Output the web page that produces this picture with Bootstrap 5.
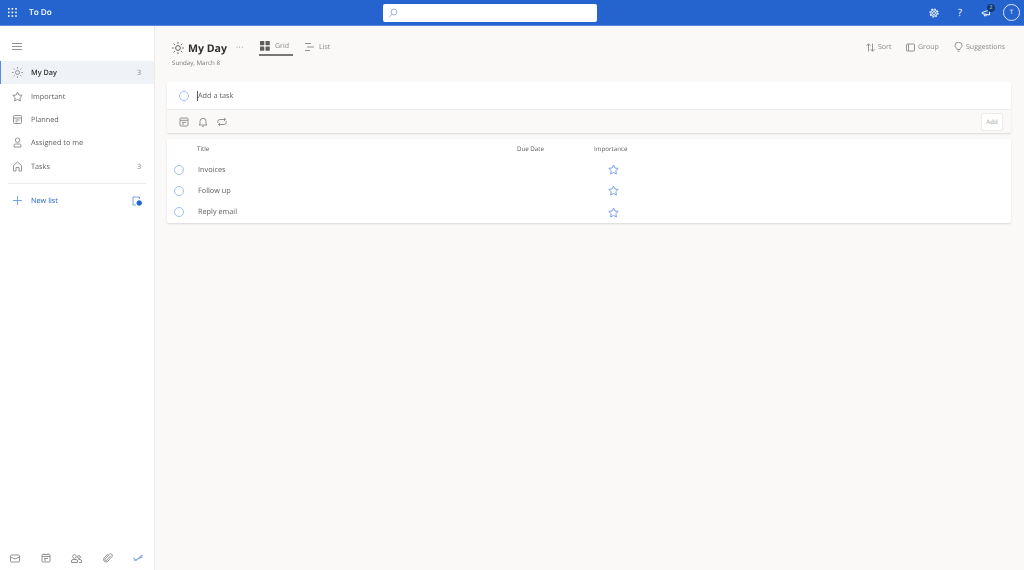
<!DOCTYPE html>
<html lang="en">
<head>
<meta charset="utf-8">
<title>To Do</title>
<link href="https://cdn.jsdelivr.net/npm/bootstrap@5.3.0/dist/css/bootstrap.min.css" rel="stylesheet">
<style>
html,body{height:570px;overflow:hidden}
body{font-family:"Open Sans","Noto Sans",sans-serif;font-size:7.3px;color:#323130;background:#faf9f8;text-rendering:geometricPrecision}
svg{display:block;fill:none;stroke:currentColor;stroke-width:.9;flex:none}
.app-top{height:26px;background:#2564cf;color:#fff;padding:0 4px 0 8px;border-bottom:1px solid #5a8ae0}
.app-name{font-size:8.2px;font-weight:600;margin-left:12px;padding-top:2px}
.search-slot{position:absolute;left:383px;top:4px;width:214px;height:18px;background:#fff;border-radius:2px;color:#8fabe3;padding-left:5px}
.top-tools{gap:16px}
.avatar-ring{width:17px;height:17px;border:1px solid #dfe8f8;border-radius:50%;font-size:6px}
.note-wrap{position:relative;margin-right:-5px}
.note-count{position:absolute;right:-3px;top:-4px;width:8px;height:8px;border-radius:50%;background:#0f3a75;font-size:5px;line-height:8px;text-align:center}
.app-body{height:544px}
.side-pane{width:155px;background:#fff;border-right:1px solid #edebe9}
.menu-btn{height:35px;padding:17px 0 0 12px;color:#8a8886}
.side-row{height:23.4px;padding:0 13px 0 12px;color:#8a8886;font-size:7.3px}
.side-row svg{margin-right:8px}
.side-row.is-on{background:#eff3f8;box-shadow:inset 1px 0 0 #5a8ae0}
.side-row .side-label{flex:1;color:#605e5c}
.side-row.is-on .side-label{color:#323130;font-weight:600}
.side-rule{margin:5px 8px 5px 8px;height:1px;background:#edebe9}
.side-new{color:#6f9ae0}
.side-new .side-label{color:#2564cf}
.side-row svg.side-tail{margin:0 -1px 0 0}
.side-foot{height:24px;padding:0 11px 0 10px;color:#8a8886}
.main-pane{padding:0 13px 0 12px}
.title-band{height:56px;padding:12px 0 0 5px}
.title-stack{width:87px}
.page-title{font-size:10.6px;font-weight:700;line-height:18px;margin:0 0 0 4px;white-space:nowrap;color:#323130;padding-top:2px}
.page-more{margin-left:9px;color:#8a8886;font-size:8px;letter-spacing:.5px}
.page-date{font-size:6.2px;color:#797775;line-height:9px}
.view-tab{height:18px;color:#8a8886;gap:5px;font-size:7px;padding:0 1px}
.view-tab.is-on{border-bottom:2px solid #797775;width:34px}
.view-list{margin-left:11px}
.act-btn{gap:3px;font-size:7px;color:#8a8886}
.act-group{height:18px;gap:15px;margin-right:6px}
.task-box{background:#fff;box-shadow:0 1px 2px rgba(0,0,0,.13);border-radius:2px}
.task-add{height:28px;padding-left:12px;border-bottom:1px solid #edebe9}
.ring-mark{width:10px;height:10px;border:1px solid #a4bfec;border-radius:50%;flex:none}
.add-hint{margin-left:8px;border-left:1px solid #605e5c;line-height:10px;color:#605e5c;font-size:7.3px}
.task-bar{height:23px;background:#faf9f8;padding:0 8px 0 12px;color:#8a8886;gap:9px;border-radius:0 0 2px 2px}
.add-btn{width:22px;height:18px;background:#fff;border:1px solid #edebe9;font-size:6.2px;color:#a19f9d;line-height:16px;text-align:center;border-radius:2px}
.grid-box{margin-top:6px;height:84px}
.grid-head{height:20px;font-size:6.2px;color:#605e5c}
.grid-row{height:21.3px;font-size:7.3px;color:#605e5c}
.cell-check{width:31px;padding-left:7px}
.cell-title{width:319px}
.cell-due{width:77px}
.star-cell{padding-left:14px;color:#6f9ae0}
.head-title{padding-left:30px;width:350px}
.app-name,.side-label,.side-count,.page-title,.page-date,.page-more,.tab-text,.act-text,.add-hint,.head-text,.row-text,.add-text{will-change:transform}
.side-label,.side-count,.tab-text,.act-text{padding-top:2px}
.row-text{padding-top:1px}
</style>
</head>
<body>
<header class="app-top d-flex align-items-center position-relative">
  <svg width="9" height="9" viewBox="0 0 9 9" style="stroke:none;fill:#fff"><rect width="1.600" height="1.600" x="0" y="0"/><rect width="1.600" height="1.600" x="3.600" y="0"/><rect width="1.600" height="1.600" x="7.200" y="0"/><rect width="1.600" height="1.600" x="0" y="3.600"/><rect width="1.600" height="1.600" x="3.600" y="3.600"/><rect width="1.600" height="1.600" x="7.200" y="3.600"/><rect width="1.600" height="1.600" x="0" y="7.200"/><rect width="1.600" height="1.600" x="3.600" y="7.200"/><rect width="1.600" height="1.600" x="7.200" y="7.200"/></svg>
  <span class="app-name">To Do</span>
  <div class="search-slot d-flex align-items-center">
    <svg width="10" height="10" viewBox="0 0 10 10"><circle cx="6" cy="4" r="2.900"/><path d="M4 6.200 1 9.200"/></svg>
  </div>
  <div class="ms-auto d-flex align-items-center top-tools">
    <svg width="10" height="10" viewBox="0 0 10 10"><circle cx="5" cy="5" r="1.500"/><circle cx="5" cy="5" r="3.200"/><circle cx="5" cy="5" r="4" stroke-width="1.200" stroke-dasharray="1.500 1.640"/></svg>
    <span style="font-size:10px;line-height:11px;width:10px;text-align:center">?</span>
    <span class="note-wrap"><svg width="11" height="10" viewBox="0 0 11 10"><path d="M1 4.500 8.500 2v5L1 5.500zM3 6l.6 2 2-.4-.4-1.200"/></svg><span class="note-count">2</span></span>
    <span class="avatar-ring d-flex align-items-center justify-content-center">T</span>
  </div>
</header>
<div class="app-body d-flex">
  <nav class="side-pane d-flex flex-column">
    <div class="menu-btn"><svg width="10" height="7" viewBox="0 0 10 7"><path d="M0 .5h10M0 3.500h10M0 6.500h10"/></svg></div>
    <div class="side-row is-on d-flex align-items-center"><svg width="11" height="11" viewBox="0 0 11 11"><circle cx="5.500" cy="5.500" r="2"/><path d="M5.500 0v1.600M5.500 9.400V11M0 5.500h1.600M9.400 5.500H11M1.600 1.600l1.100 1.100M8.300 8.300l1.100 1.100M1.600 9.400l1.100-1.100M8.300 2.700l1.100-1.100"/></svg><span class="side-label">My Day</span><span class="side-count">3</span></div>
    <div class="side-row d-flex align-items-center"><svg width="11" height="11" viewBox="0 0 11 11"><path d="m5.500 1 1.400 3 3.300.4-2.400 2.300.6 3.300-2.900-1.600L2.600 10l.6-3.300L.8 4.400l3.300-.4z"/></svg><span class="side-label">Important</span></div>
    <div class="side-row d-flex align-items-center"><svg width="11" height="11" viewBox="0 0 11 11"><rect x="1.500" y="1.500" width="8" height="8" rx="1"/><path d="M1.500 4h8M3.500 6h4M3.500 7.800h2"/></svg><span class="side-label">Planned</span></div>
    <div class="side-row d-flex align-items-center"><svg width="11" height="11" viewBox="0 0 11 11"><circle cx="5.500" cy="3.200" r="2.200"/><path d="M2 10V8.500a1.500 1.500 0 0 1 1.500-1.500h4A1.500 1.500 0 0 1 9 8.500V10z"/></svg><span class="side-label">Assigned to me</span></div>
    <div class="side-row d-flex align-items-center"><svg width="11" height="11" viewBox="0 0 11 11"><path d="M1.500 10V4.500l4-3.500 4 3.500V10H7V6.500H4V10z"/></svg><span class="side-label">Tasks</span><span class="side-count">3</span></div>
    <div class="side-rule"></div>
    <div class="side-row side-new d-flex align-items-center"><svg width="11" height="11" viewBox="0 0 11 11"><path d="M5.500 1v9M1 5.500h9"/></svg><span class="side-label">New list</span><svg class="side-tail" width="10" height="10" viewBox="0 0 10 10"><path d="M7.500 3V1H1v8h3"/><circle cx="7.200" cy="7" r="2.300" fill="#2564cf" stroke="#2564cf"/></svg></div>
    <div class="side-foot mt-auto d-flex align-items-center justify-content-between">
      <svg width="10" height="9" viewBox="0 0 10 9"><rect x=".5" y="1" width="9" height="7" rx="1"/><path d="M.5 3 5 5l4.500-2"/></svg>
      <svg width="10" height="10" viewBox="0 0 10 10"><rect x="1" y="1.500" width="8" height="7.500" rx="1"/><path d="M1 3.500h8M3 5.500h4M3 7h2M3 .5v1M7 .5v1"/></svg>
      <svg width="11" height="9" viewBox="0 0 11 9"><circle cx="3.500" cy="2.500" r="1.800"/><circle cx="8" cy="3" r="1.400"/><path d="M.5 8.500V7A1.500 1.500 0 0 1 2 5.500h3A1.500 1.500 0 0 1 6.500 7v1.500zM7.500 5.500H9A1.500 1.500 0 0 1 10.500 7v1.500H8"/></svg>
      <svg width="10" height="10" viewBox="0 0 10 10"><path d="M7.800 2.600 3.500 7.400a1 1 0 0 1-1.500-1.300l4.400-5a1.800 1.800 0 0 1 2.700 2.300l-4.400 5a2.500 2.500 0 0 1-3.700-3.300L4.800 1"/></svg>
      <svg width="10" height="8" viewBox="0 0 10 8" style="color:#8fabe3;stroke-width:1.100"><path d="m.5 4 2.500 2.500L9.500 1M1 6.500 9.500 3"/></svg>
    </div>
  </nav>
  <main class="main-pane flex-grow-1">
    <div class="title-band d-flex align-items-start">
      <div class="title-stack">
        <div class="d-flex align-items-center">
          <svg width="12" height="12" viewBox="0 0 11 11" style="color:#605e5c"><circle cx="5.500" cy="5.500" r="2.200"/><path d="M5.500 0v1.600M5.500 9.400V11M0 5.500h1.600M9.400 5.500H11M1.600 1.600l1.100 1.100M8.300 8.300l1.100 1.100M1.600 9.400l1.100-1.100M8.300 2.700l1.100-1.100"/></svg>
          <h1 class="page-title">My Day</h1>
          <span class="page-more">···</span>
        </div>
        <div class="page-date">Sunday, March 8</div>
      </div>
      <div class="view-tab is-on d-flex align-items-center">
        <svg width="10" height="10" viewBox="0 0 10 10" style="stroke:none;fill:#605e5c"><rect width="4.300" height="4.300" rx=".6"/><rect x="5.500" width="4.300" height="4.300" rx=".6"/><rect y="5.500" width="4.300" height="4.300" rx=".6"/><rect x="5.500" y="5.500" width="4.300" height="4.300" rx=".6"/></svg><span class="tab-text">Grid</span>
      </div>
      <div class="view-tab view-list d-flex align-items-center">
        <svg width="9" height="8" viewBox="0 0 9 8"><path d="M0 .5h6M2 4h7M0 7.500h5"/></svg><span class="tab-text">List</span>
      </div>
      <div class="act-group ms-auto d-flex align-items-center">
        <span class="act-btn d-flex align-items-center"><svg width="9" height="9" viewBox="0 0 9 9"><path d="M2.500 8.500V.8M.5 2.800l2-2 2 2M6.500.5v7.700M4.500 6.200l2 2 2-2"/></svg><span class="act-text">Sort</span></span>
        <span class="act-btn d-flex align-items-center"><svg width="9" height="9" viewBox="0 0 9 9"><rect x=".5" y="1" width="8" height="7" rx=".8"/><path d="M2.500 1v7"/></svg><span class="act-text">Group</span></span>
        <span class="act-btn d-flex align-items-center"><svg width="9" height="10" viewBox="0 0 9 10"><path d="M3 7.500C3 6 1 5.500 1 3.500a3.500 3.300 0 0 1 7 0C8 5.500 6 6 6 7.500zM3.500 9.300h2"/></svg><span class="act-text">Suggestions</span></span>
      </div>
    </div>
    <section class="task-box">
      <div class="task-add d-flex align-items-center"><span class="ring-mark"></span><span class="add-hint">Add a task</span></div>
      <div class="task-bar d-flex align-items-center">
        <svg width="10" height="10" viewBox="0 0 10 10"><rect x="1" y="1" width="8" height="8" rx="1"/><path d="M1 3.300h8M3 5.300h4M3 7h2"/></svg>
        <svg width="10" height="10" viewBox="0 0 10 10"><path d="M2 7V4.300a3 3 0 0 1 6 0V7l1 1H1zM4 9.300h2"/></svg>
        <svg width="10" height="10" viewBox="0 0 10 10"><path d="M.8 6V4.500a2 2 0 0 1 2-2h5.700M7 1l1.500 1.500L7 4M9.200 4v1.500a2 2 0 0 1-2 2H1.500M3 6 1.500 7.500 3 9"/></svg>
        <span class="add-btn ms-auto"><span class="add-text">Add</span></span>
      </div>
    </section>
    <section class="task-box grid-box">
      <div class="grid-head d-flex align-items-center"><span class="head-title"><span class="head-text d-inline-block">Title</span></span><span class="cell-due"><span class="head-text d-inline-block">Due Date</span></span><span class="head-text">Importance</span></div>
      <div class="grid-row d-flex align-items-center"><span class="cell-check"><span class="ring-mark d-block"></span></span><span class="cell-title"><span class="row-text d-inline-block">Invoices</span></span><span class="cell-due"></span><span class="star-cell"><svg width="11" height="11" viewBox="0 0 11 11"><path d="m5.500 1 1.400 3 3.300.4-2.400 2.300.6 3.300-2.900-1.600L2.600 10l.6-3.300L.8 4.400l3.300-.4z"/></svg></span></div>
      <div class="grid-row d-flex align-items-center"><span class="cell-check"><span class="ring-mark d-block"></span></span><span class="cell-title"><span class="row-text d-inline-block">Follow up</span></span><span class="cell-due"></span><span class="star-cell"><svg width="11" height="11" viewBox="0 0 11 11"><path d="m5.500 1 1.400 3 3.300.4-2.400 2.300.6 3.300-2.900-1.600L2.600 10l.6-3.300L.8 4.400l3.300-.4z"/></svg></span></div>
      <div class="grid-row d-flex align-items-center"><span class="cell-check"><span class="ring-mark d-block"></span></span><span class="cell-title"><span class="row-text d-inline-block">Reply email</span></span><span class="cell-due"></span><span class="star-cell"><svg width="11" height="11" viewBox="0 0 11 11"><path d="m5.500 1 1.400 3 3.300.4-2.400 2.300.6 3.300-2.900-1.600L2.600 10l.6-3.300L.8 4.400l3.300-.4z"/></svg></span></div>
    </section>
  </main>
</div>
<script src="https://cdn.jsdelivr.net/npm/bootstrap@5.3.0/dist/js/bootstrap.bundle.min.js"></script>
</body>
</html>
